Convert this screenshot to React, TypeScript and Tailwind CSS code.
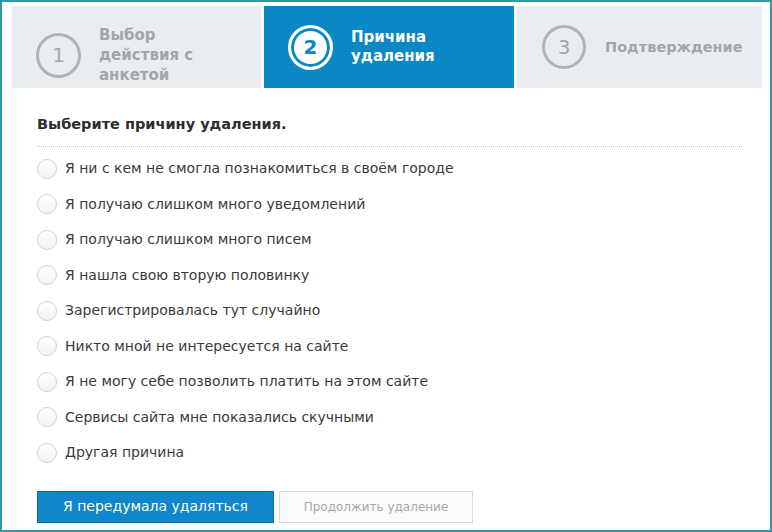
import React from "react";

const reasons = [
  "Я ни с кем не смогла познакомиться в своём городе",
  "Я получаю слишком много уведомлений",
  "Я получаю слишком много писем",
  "Я нашла свою вторую половинку",
  "Зарегистрировалась тут случайно",
  "Никто мной не интересуется на сайте",
  "Я не могу себе позволить платить на этом сайте",
  "Сервисы сайта мне показались скучными",
  "Другая причина",
];

export default function App() {
  return (
    <div
      className="w-[772px] h-[532px] border-2 border-[#2a9aa3] bg-white overflow-hidden"
      style={{ fontFamily: '"DejaVu Sans", Verdana, sans-serif' }}
    >
      <div className="flex gap-[3px] pt-[4px] pl-[10px]">
        <div className="w-[249px] h-[82px] bg-[#e9edf2] flex items-center pl-6 pt-4">
          <div className="w-[45px] h-[45px] rounded-full border-[3px] border-[#b0b3b6] flex items-center justify-center text-[20px] text-[#a5a8ab] shrink-0">
            1
          </div>
          <div className="ml-[18px] text-[15px] leading-[20px] font-bold text-[#a2a6aa] w-[110px]">
            Выбор действия с анкетой
          </div>
        </div>
        <div className="w-[250px] h-[82px] bg-[#0a88c6] flex items-center pl-6">
          <div className="w-[45px] h-[45px] rounded-full border-[3px] border-white bg-white shadow-[inset_0_0_0_3px_#0a88c6] flex items-center justify-center text-[20px] font-bold text-[#0a88c6] shrink-0">
            2
          </div>
          <div className="ml-[18px] text-[15px] leading-[19px] font-bold text-white">
            Причина
            <br />
            удаления
          </div>
        </div>
        <div className="w-[245px] h-[82px] bg-[#e9edf2] flex items-center pl-[25px]">
          <div className="w-[44px] h-[44px] rounded-full border-[3px] border-[#b0b3b6] flex items-center justify-center text-[20px] text-[#a5a8ab] shrink-0">
            3
          </div>
          <div className="ml-[19px] text-[14.5px] leading-[18px] font-bold text-[#a2a6aa]">
            Подтверждение
          </div>
        </div>
      </div>

      <div className="pl-[35px] pr-[28px]">
        <div className="mt-[26px] text-[14.5px] font-bold text-[#2b2d30] leading-[20px]">
          Выберите причину удаления.
        </div>
        <div className="mt-[12px] border-t border-dotted border-[#c4c4c4]" />
        <div className="mt-[4px] flex flex-col">
          {reasons.map((r) => (
            <label key={r} className="flex items-center h-[35.5px] cursor-pointer">
              <span className="w-[20px] h-[20px] rounded-full border border-[#d2d2d2] bg-gradient-to-b from-white to-[#f3f3f3] shrink-0" />
              <span className="ml-[8px] text-[14px] text-[#3a3a3a]">{r}</span>
            </label>
          ))}
        </div>
        <div className="mt-[20px] flex gap-[5px]">
          <button className="w-[237px] h-[32px] bg-[#1186c8] border border-[#0c6fa8] text-white text-[14px]">
            Я передумала удаляться
          </button>
          <button className="w-[194px] h-[32px] bg-[#fbfbfb] border border-[#dcdcdc] text-[#a8a8a8] text-[12px]">
            Продолжить удаление
          </button>
        </div>
      </div>
    </div>
  );
}
